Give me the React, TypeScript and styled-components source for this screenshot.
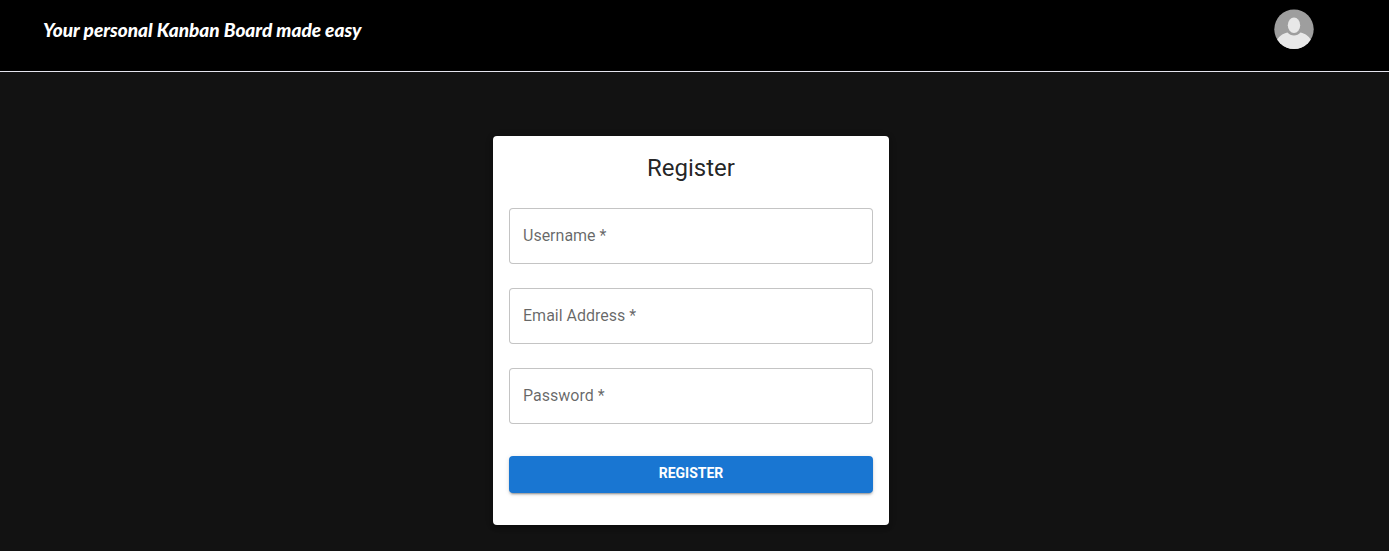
import { useState, type FormEvent } from "react";
import styled, { createGlobalStyle } from "styled-components";

const GlobalStyle = createGlobalStyle`
  *, *::before, *::after {
    box-sizing: border-box;
  }

  body {
    margin: 0;
    background: #121212;
    font-family: Roboto, "Liberation Sans", sans-serif;
  }
`;

const Header = styled.header`
  display: flex;
  align-items: flex-start;
  justify-content: space-between;
  height: 72px;
  padding: 9px 75px 0 43px;
  background: #000;
  border-bottom: 1px solid #e4e4ee;
`;

const Tagline = styled.a`
  padding-top: 9px;
  color: #fff;
  font-family: Lato, "Open Sans", sans-serif;
  font-size: 19px;
  font-style: italic;
  font-weight: 900;
  line-height: 24px;
  text-decoration: none;
  white-space: nowrap;
`;

const AvatarButton = styled.button`
  display: flex;
  padding: 0;
  border: 0;
  border-radius: 50%;
  background: none;
  cursor: pointer;
`;

const Main = styled.main`
  display: flex;
  justify-content: center;
  padding: 64px 31px 26px 24px;
`;

const Card = styled.form`
  display: flex;
  flex-direction: column;
  width: 100%;
  max-width: 396px;
  padding: 16px 16px 32px;
  border-radius: 4px;
  background: #fff;
  box-shadow: 0 3px 3px -2px rgba(0, 0, 0, 0.2), 0 3px 4px 0 rgba(0, 0, 0, 0.14),
    0 1px 8px 0 rgba(0, 0, 0, 0.12);
`;

const Title = styled.h1`
  margin: 0;
  color: rgba(0, 0, 0, 0.87);
  font-size: 24px;
  font-weight: 400;
  line-height: 32px;
  text-align: center;
`;

const Fields = styled.div`
  display: flex;
  flex-direction: column;
  gap: 24px;
  margin: 24px 0 32px;
`;

const FieldBox = styled.div`
  position: relative;
`;

const FieldLabel = styled.label`
  position: absolute;
  top: 16px;
  left: 14px;
  color: rgba(0, 0, 0, 0.6);
  font-size: 16px;
  line-height: 24px;
  pointer-events: none;
`;

const FieldInput = styled.input`
  display: block;
  width: 100%;
  height: 56px;
  padding: 0 13px;
  border: 1px solid rgba(0, 0, 0, 0.23);
  border-radius: 4px;
  background: #fff;
  color: rgba(0, 0, 0, 0.87);
  font: inherit;
  font-size: 16px;

  &:focus {
    border-color: #1976d2;
    outline: 1px solid #1976d2;
  }

  &:focus + ${FieldLabel}, &:not(:placeholder-shown) + ${FieldLabel} {
    top: -12px;
    left: 10px;
    padding: 0 4px;
    background: #fff;
    font-size: 12px;
  }
`;

const SubmitButton = styled.button`
  height: 37px;
  padding: 0 16px 3px;
  border: 0;
  border-radius: 4px;
  background: #1976d2;
  box-shadow: 0 3px 1px -2px rgba(0, 0, 0, 0.2), 0 2px 2px 0 rgba(0, 0, 0, 0.14),
    0 1px 5px 0 rgba(0, 0, 0, 0.12);
  color: #fff;
  font-family: inherit;
  font-size: 14px;
  font-weight: 700;
  line-height: 24px;
  text-transform: uppercase;
  cursor: pointer;

  &:hover {
    background: #1565c0;
  }
`;

const fields = [
  { id: "username", label: "Username", type: "text", autoComplete: "username" },
  { id: "email", label: "Email Address", type: "email", autoComplete: "email" },
  { id: "password", label: "Password", type: "password", autoComplete: "new-password" },
];

function Avatar() {
  return (
    <svg width="40" height="40" viewBox="0 0 40 40" aria-hidden="true">
      <defs>
        <clipPath id="avatar-circle">
          <circle cx="20" cy="20.2" r="19.7" />
        </clipPath>
      </defs>
      <g clipPath="url(#avatar-circle)">
        <rect width="40" height="40" fill="#9e9e9e" />
        <ellipse cx="20" cy="16.3" rx="6.200" ry="7.800" fill="#e8e8e8" />
        <path
          d="M2 40V33C4 28 8.500 24.500 13.500 23.600C15.200 25.600 17.400 26.600 20 26.600C22.600 26.600 24.800 25.600 26.500 23.600C31.500 24.500 36 28 38 33V40Z"
          fill="#e8e8e8"
        />
      </g>
    </svg>
  );
}

export default function App() {
  const [values, setValues] = useState<Record<string, string>>({});
  const handleSubmit = (event: FormEvent) => event.preventDefault();

  return (
    <>
      <GlobalStyle />
      <Header>
        <Tagline href="/">Your personal Kanban Board made easy</Tagline>
        <AvatarButton type="button" aria-label="Account">
          <Avatar />
        </AvatarButton>
      </Header>
      <Main>
        <Card onSubmit={handleSubmit}>
          <Title>Register</Title>
          <Fields>
            {fields.map(({ id, label, type, autoComplete }) => (
              <FieldBox key={id}>
                <FieldInput
                  id={id}
                  type={type}
                  autoComplete={autoComplete}
                  placeholder=" "
                  required
                  value={values[id] ?? ""}
                  onChange={(event) => setValues({ ...values, [id]: event.target.value })}
                />
                <FieldLabel htmlFor={id}>{label} *</FieldLabel>
              </FieldBox>
            ))}
          </Fields>
          <SubmitButton type="submit">Register</SubmitButton>
        </Card>
      </Main>
    </>
  );
}
